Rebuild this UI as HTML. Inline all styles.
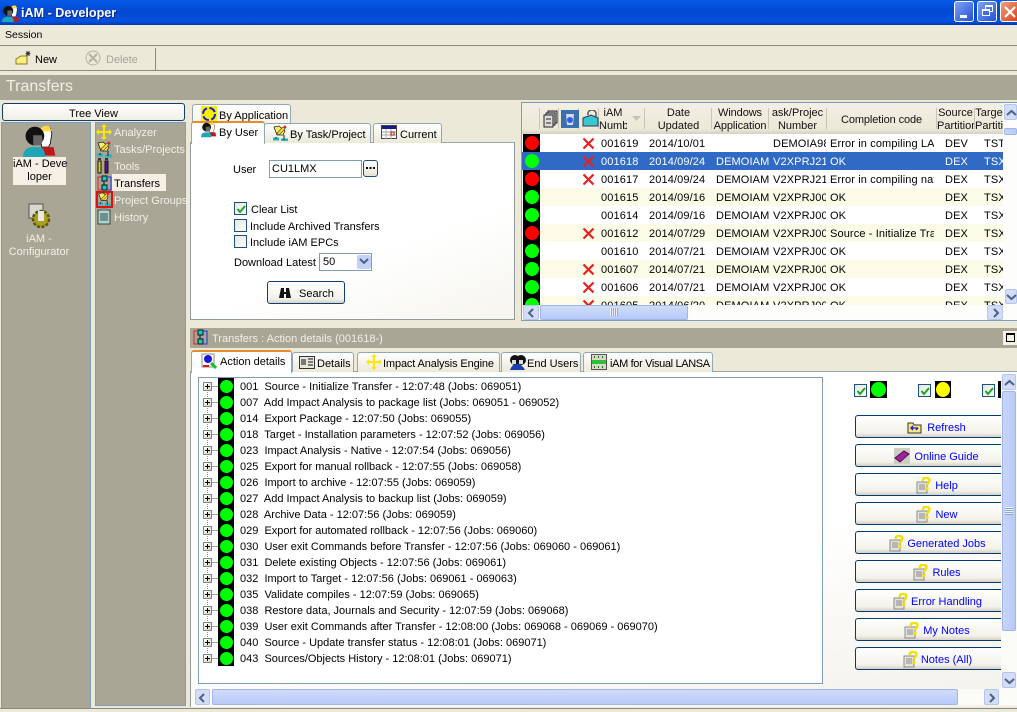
<!DOCTYPE html>
<html><head><meta charset="utf-8">
<style>
html,body{margin:0;padding:0;width:1017px;height:712px;overflow:hidden;background:#ece9d8}
body{position:relative;font-family:"Liberation Sans",sans-serif;font-size:11px;color:#000}
div,span,svg{position:absolute;box-sizing:border-box}
.t{white-space:nowrap;line-height:18px}
.c{text-align:center}
.tab{background:linear-gradient(#fff,#ece9d8);border:1px solid #91a7b4;border-bottom:none;border-radius:3px 3px 0 0}
.act{background:#fff;border-top:2px solid #e68b2c;border-left:1px solid #91a7b4;border-right:1px solid #91a7b4;border-radius:3px 3px 0 0;height:23px}
.cb{width:13px;height:13px;border:1px solid #1c5180;background:linear-gradient(135deg,#e6e6e0,#fff)}
.btn{left:855px;width:146px;height:23px;border:1px solid #003c74;border-right:none;border-radius:3px 0 0 3px;background:linear-gradient(#fff,#f3f2ea 80%,#d6d0c5);color:#00f;text-align:center;line-height:23px;white-space:nowrap;padding:1px 0 0 36px}
.pl{left:203px;width:9px;height:9px;border:1px solid #848484;background:linear-gradient(135deg,#fff,#d8d4c8)}
.pl:before{content:"";position:absolute;left:1px;top:3px;width:5px;height:1px;background:#000}
.pl:after{content:"";position:absolute;left:3px;top:1px;width:1px;height:5px;background:#000}
.g{left:220px;width:13px;height:13px;border-radius:50%;background:#0f0}
.row{left:540px;width:463px;height:18px}
.dot{left:525px;width:14px;height:14px;border-radius:50%}
.hd{top:105px;line-height:13px;text-align:center;white-space:nowrap;overflow:hidden;height:28px;color:#111;padding-top:2px}
.sep{top:108px;width:1px;height:21px;background:#c9c6b4}
.sb{background:linear-gradient(90deg,#c8d6fb,#b7c9f7);border:1px solid #9fb6ea;border-radius:2px}
.arr{background:#d3ddf8;border:1px solid #b5c6ee;border-radius:2px;color:#4d6185;text-align:center;font-weight:bold}
.w{color:#fff}
.gt{letter-spacing:.12px}
</style></head><body>
<svg width="0" height="0" style="left:0;top:0"><defs>
<g id="x"><path d="M1.500 1.500L11.500 11.500M11.500 1.500L1.500 11.500" stroke="#e8201c" stroke-width="2.200" fill="none"/></g>
<g id="q"><rect x="1" y="5" width="10" height="11" fill="#e4e2dc" stroke="#8a8a8a"/><path d="M3 8h6M3 10h6M3 12h6" stroke="#8a8a8a"/><path d="M6.500 4Q7.500 0 11 .8Q15 2 12.500 5.500L10.800 8" stroke="#f5e000" stroke-width="2.500" fill="none"/><rect x="9.500" y="10" width="3" height="3" fill="#f5e000"/></g>
<g id="tk"><path d="M2 2l5-1 6 5-2 4-6 0z" fill="#ffef60" stroke="#222" stroke-width=".8"/><path d="M5 8l6-6 2 2-6 6z" fill="#ffd820" stroke="#444" stroke-width=".6"/><path d="M12 1l2 2" stroke="#e02020" stroke-width="2"/><path d="M1 14h6M9 15h7" stroke="#19b7c8" stroke-width="3"/><path d="M4 12v2M12 10v5" stroke="#222"/></g>
<g id="ppl"><path d="M10 3q3-3 6-1l1 3-1 6-1 2h-4z" fill="#fff" stroke="#111" stroke-width=".5"/><path d="M9 4q2-4 6-3.500l2 3-7 .5z" fill="#ffd84a"/><path d="M11 13h7l1 5h-8z" fill="#c01818"/><circle cx="7" cy="6.500" r="5.500" fill="#111"/><path d="M6 6h5l.5 3-1 3H6z" fill="#666"/><path d="M0 19q0-6 6-6h4q3 1 3 6z" fill="#1fa5b8"/></g>
<g id="ck"><path d="M2.500 6l2.500 3 5-6" stroke="#21a121" stroke-width="2" fill="none"/></g>
<g id="move"><path d="M8 0l3 3H9v4h4V5l3 3-3 3V9H9v4h2l-3 3-3-3h2V9H3v2L0 8l3-3v2h4V3H5z" fill="#ffe800"/></g>
</defs></svg>

<!-- title bar -->
<div style="left:0;top:0;width:1017px;height:25px;background:linear-gradient(#0a54e4 0,#0458e6 8%,#0148d0 45%,#0451e0 85%,#0038b0)"></div>
<svg style="left:2px;top:5px" width="18" height="18" viewBox="0 0 20 20"><use href="#ppl"/></svg>
<div class="t w" style="left:21px;top:5px;font-size:12.600px;line-height:16px;font-weight:bold;text-shadow:1px 1px #03288a">iAM - Developer</div>
<div style="left:954px;top:1px;width:20px;height:21px;border:1px solid #fff;border-radius:3px;background:linear-gradient(135deg,#7fa3f2,#2350d8)"><div style="left:5px;top:13px;width:7px;height:3px;background:#fff"></div></div>
<div style="left:977px;top:1px;width:20px;height:21px;border:1px solid #fff;border-radius:3px;background:linear-gradient(135deg,#7fa3f2,#2350d8)"><div style="left:7px;top:3px;width:8px;height:7px;border:1px solid #fff;border-top-width:2px"></div><div style="left:4px;top:7px;width:8px;height:7px;border:1px solid #fff;border-top-width:2px;background:#3f6ae0"></div></div>
<div style="left:1000px;top:1px;width:17px;height:21px;border:1px solid #fff;border-right:none;border-radius:3px 0 0 3px;background:linear-gradient(135deg,#f0a080,#d84318)"><svg style="left:3px;top:4px" width="12" height="12"><path d="M1 1l10 10M11 1L1 11" stroke="#fff" stroke-width="2.200"/></svg></div>

<!-- menu / toolbar -->
<div class="t" style="left:5px;top:26px;font-size:10.500px">Session</div>
<div style="left:0;top:45px;width:1017px;height:1px;background:#8c8a80"></div>
<svg style="left:15px;top:50px" width="16" height="16"><path d="M1 9l5-3h6v8H1z" fill="#ffef80" stroke="#8a7a20"/><path d="M13 1v5M10.500 3.500h5M11 1.500l4 4M15 1.500l-4 4" stroke="#222" stroke-width=".8"/></svg>
<div class="t" style="left:35px;top:51px">New</div>
<svg style="left:85px;top:50px" width="16" height="16"><circle cx="8" cy="8" r="7" fill="none" stroke="#b5b3a6"/><path d="M4 4l8 8M12 4l-8 8" stroke="#b5b3a6" stroke-width="2" fill="none"/></svg>
<div class="t" style="left:106px;top:51px;color:#a5a398">Delete</div>
<div style="left:155px;top:48px;width:1px;height:22px;background:#8c8a80"></div>
<div style="left:0;top:70px;width:1017px;height:1px;background:#8c8a80"></div>
<div style="left:0;top:75px;width:1017px;height:25px;background:#a9a696"></div>
<div class="t w" style="left:6px;top:78px;font-size:16px;line-height:18px;color:#f2efe6">Transfers</div>

<!-- left -->
<div class="c" style="left:2px;top:103px;width:183px;height:18px;border:1px solid #0f3f73;border-radius:3px;background:linear-gradient(#fff,#f1efe5);line-height:18px;padding-top:1px">Tree View</div>
<div style="left:1px;top:122px;width:90px;height:587px;background:#a9a696;border:1px solid #7f9db9"></div>
<div style="left:95px;top:122px;width:91px;height:584px;background:#a9a696;border:1px solid #7f9db9"></div>
<svg style="left:23px;top:125px" width="34" height="34" viewBox="0 0 20 20"><use href="#ppl"/></svg>
<div class="c" style="left:13px;top:157px;width:53px;height:28px;background:#f5efe6;line-height:13px;padding-top:1px;white-space:nowrap">iAM - Deve<br>loper</div>
<svg style="left:27px;top:203px" width="26" height="26"><rect x="2" y="1" width="14" height="14" fill="#d8d8d0" stroke="#555"/><circle cx="14" cy="16" r="8" fill="#a8a020" stroke="#5a5410" stroke-width="2.500" stroke-dasharray="3 1.500"/><rect x="11" y="8" width="6" height="10" fill="#e8e8e0"/></svg>
<div class="c w" style="left:4px;top:233px;width:70px;line-height:13px;color:#f2efe6">iAM -<br>Configurator</div>

<svg style="left:96px;top:124px" width="16" height="16"><use href="#move"/></svg>
<svg style="left:96px;top:141px" width="17" height="17"><use href="#tk"/></svg>
<svg style="left:97px;top:158px" width="14" height="16"><rect x="1" y="3" width="3" height="12" fill="#e8d020" stroke="#111"/><rect x="8" y="3" width="3" height="12" fill="#601090" stroke="#111"/><path d="M1 1h3M8 1h3" stroke="#333" stroke-width="2"/></svg>
<svg style="left:97px;top:175px" width="15" height="17"><path d="M4 2H1v13h3" fill="none" stroke="#e02020"/><path d="M11 2h3v13h-3" fill="none" stroke="#2030e0"/><rect x="5" y="1" width="5" height="5" fill="#1cc" stroke="#111"/><rect x="5" y="10" width="5" height="5" fill="#1cc" stroke="#111"/><path d="M7 6v4" stroke="#111"/></svg>
<svg style="left:96px;top:191px" width="17" height="17"><path d="M1 16V1h15v15" fill="none" stroke="#e01010" stroke-width="2"/><path d="M0 16h17" stroke="#e01010" stroke-width="2"/><use href="#tk" transform="translate(1,1) scale(.85)"/></svg>
<svg style="left:97px;top:208px" width="14" height="17"><rect x="1" y="2" width="12" height="14" fill="#a8d8d0" stroke="#443"/><rect x="4" y="0" width="6" height="3" fill="#888"/><path d="M3 6h8M3 8h8M3 10h8M3 12h8" stroke="#345"/></svg>
<div class="t w" style="left:114px;top:124px;color:#f2efe6">Analyzer</div>
<div class="t w" style="left:114px;top:141px;color:#f2efe6">Tasks/Projects</div>
<div class="t w" style="left:114px;top:158px;color:#f2efe6">Tools</div>
<div style="left:112px;top:174px;width:54px;height:17px;background:#f5efe6"></div>
<div class="t" style="left:114px;top:175px">Transfers</div>
<div class="t w" style="left:114px;top:192px;color:#f2efe6">Project Groups</div>
<div class="t w" style="left:114px;top:209px;color:#f2efe6">History</div>

<!-- tab pane top -->
<div class="tab" style="left:192px;top:104px;width:99px;height:20px;background:linear-gradient(#fff,#f5f3ea)"></div>
<svg style="left:201px;top:106px" width="16" height="16"><rect width="16" height="16" fill="#f6f000"/><circle cx="8" cy="8" r="6" fill="none" stroke="#1818d8" stroke-width="2" stroke-dasharray="7 2.500"/></svg>
<div class="t" style="left:219px;top:107px">By Application</div>
<div style="left:190px;top:142px;width:325px;height:178px;background:linear-gradient(160deg,#fff,#fff 60%,#f6f5ef);border:1px solid #919b9c;border-top:1px solid #91a7b4"></div>
<div class="tab" style="left:264px;top:123px;width:107px;height:20px"></div>
<div class="tab" style="left:373px;top:123px;width:69px;height:20px"></div>
<div class="act" style="left:191px;top:121px;width:74px;height:23px"></div>
<svg style="left:201px;top:122px" width="16" height="16" viewBox="0 0 20 20"><use href="#ppl"/></svg>
<div class="t" style="left:219px;top:124px">By User</div>
<svg style="left:272px;top:125px" width="16" height="16"><use href="#tk"/></svg>
<div class="t" style="left:290px;top:126px">By Task/Project</div>
<svg style="left:381px;top:125px" width="16" height="15"><rect x=".5" y=".5" width="15" height="13" fill="#fff" stroke="#444"/><rect x="1" y="1" width="14" height="3" fill="#1a1a80"/><path d="M1 7h14M1 10h14M5 4v10M10 4v10" stroke="#aaa"/><rect x="10" y="7" width="3" height="3" fill="none" stroke="#a01010"/></svg>
<div class="t" style="left:400px;top:126px">Current</div>

<div class="t" style="left:233px;top:161px">User</div>
<div class="t" style="left:269px;top:160px;width:93px;height:18px;background:#fff;border:1px solid #7f9db9;padding:0 2px;line-height:16px">CU1LMX</div>
<div style="left:363px;top:160px;width:15px;height:17px;border:1px solid #1c4f80;border-radius:3px;background:linear-gradient(#fff,#e6e3d6)"><div style="left:2px;top:6px;width:9px;height:2px;background-image:linear-gradient(90deg,#000 2px,transparent 2px);background-size:3.500px 2px"></div></div>
<div class="cb" style="left:234px;top:202px"></div><svg style="left:235px;top:203px" width="12" height="12"><use href="#ck"/></svg>
<div class="t" style="left:251px;top:201px">Clear List</div>
<div class="cb" style="left:234px;top:219px"></div>
<div class="t" style="left:250px;top:218px">Include Archived Transfers</div>
<div class="cb" style="left:234px;top:235px"></div>
<div class="t" style="left:250px;top:234px">Include iAM EPCs</div>
<div class="t" style="left:234px;top:254px">Download Latest</div>
<div style="left:319px;top:253px;width:53px;height:18px;background:#fff;border:1px solid #7f9db9"><div class="t" style="left:3px;top:0;line-height:16px">50</div><div style="left:37px;top:1px;width:14px;height:14px;background:#c3d2f7;border-radius:2px"><svg style="left:2px;top:3px" width="10" height="8"><path d="M1 1l4 4 4-4" stroke="#4d6185" stroke-width="2" fill="none"/></svg></div></div>
<div style="left:267px;top:281px;width:78px;height:23px;border:1px solid #0f3f73;border-radius:3px;background:linear-gradient(#fff,#f3f2ea 80%,#d6d0c5)"></div>
<svg style="left:277px;top:285px" width="16" height="14"><path d="M2 13L4 3h3v4h2V3h3l2 10h-5V9H7v4z" fill="#111"/></svg>
<div class="t" style="left:299px;top:285px">Search</div>

<!-- grid -->
<div style="left:521px;top:102px;width:496px;height:219px;background:#fff;border:1px solid #7f9db9;border-right:none"></div>
<div style="left:522px;top:103px;width:481px;height:31px;background:linear-gradient(#f2efe4,#ece9d8 85%,#d6d2c0)"></div>
<div class="sep" style="left:539px"></div><div class="sep" style="left:558px"></div><div class="sep" style="left:578px"></div><div class="sep" style="left:598px"></div><div class="sep" style="left:644px"></div><div class="sep" style="left:711px"></div><div class="sep" style="left:768px"></div><div class="sep" style="left:826px"></div><div class="sep" style="left:936px"></div><div class="sep" style="left:974px"></div>
<svg style="left:543px;top:110px" width="15" height="18"><rect x="5" y="1" width="9" height="12" fill="#ccc" stroke="#222"/><rect x="3" y="3" width="9" height="12" fill="#ccc" stroke="#222"/><rect x="1" y="5" width="9" height="12" fill="#ddd" stroke="#222"/><path d="M3 9h5M3 13h5" stroke="#222"/></svg>
<svg style="left:561px;top:110px" width="18" height="18"><rect width="18" height="18" fill="#3a70b0"/><path d="M5 4h8l-1 11H6z" fill="#d8d8e8"/><circle cx="9" cy="10" r="3" fill="#3060e0"/></svg>
<svg style="left:582px;top:110px" width="17" height="18"><path d="M1 8l8-3 7 3v8H1z" fill="#38c8d0" stroke="#335"/><path d="M6 5a4 4 0 018-2v4" fill="none" stroke="#555" stroke-width="1.500"/></svg>
<div class="hd" style="left:599px;width:28px">iAM<br>Numbe</div>
<svg style="left:631px;top:115px" width="12" height="7"><path d="M1 1h9L5.500 6z" fill="#c8c5b4"/></svg>
<div class="hd" style="left:646px;width:65px">Date<br>Updated</div>
<div class="hd" style="left:712px;width:56px;letter-spacing:-.1px">Windows<br>Application</div>
<div class="hd" style="left:769px;width:57px">ask/Projec<br>Number</div>
<div class="hd" style="left:827px;width:109px;line-height:14px;padding-top:8px;letter-spacing:-.1px">Completion code</div>
<div class="hd" style="left:937px;width:37px">Source<br>Partition</div>
<div class="hd" style="left:975px;width:28px">Targe<br>Partitic</div>

<div style="left:523px;top:134px;width:17px;height:171px;background:#000"></div>
<div class="row" style="top:152px;left:522px;width:481px;background:#316ac5"></div>
<div class="row" style="top:188px;background:#fbfbe8"></div>
<div class="row" style="top:224px;background:#fbfbe8"></div>
<div class="row" style="top:260px;background:#fbfbe8"></div>
<div class="row" style="top:296px;height:9px;background:#fbfbe8"></div>
<div class="dot" style="top:136px;background:#f00"></div>
<div class="dot" style="top:154px;background:#0f0"></div>
<div class="dot" style="top:172px;background:#f00"></div>
<div class="dot" style="top:190px;background:#0f0"></div>
<div class="dot" style="top:208px;background:#0f0"></div>
<div class="dot" style="top:226px;background:#f00"></div>
<div class="dot" style="top:244px;background:#0f0"></div>
<div class="dot" style="top:262px;background:#0f0"></div>
<div class="dot" style="top:280px;background:#0f0"></div>
<svg style="left:582px;top:137px" width="13" height="13"><use href="#x"/></svg>
<svg style="left:582px;top:155px" width="13" height="13"><use href="#x"/></svg>
<svg style="left:582px;top:173px" width="13" height="13"><use href="#x"/></svg>
<svg style="left:582px;top:227px" width="13" height="13"><use href="#x"/></svg>
<svg style="left:582px;top:263px" width="13" height="13"><use href="#x"/></svg>
<svg style="left:582px;top:281px" width="13" height="13"><use href="#x"/></svg>

<div class="gt" style="left:600px;top:134px;width:403px;height:171px;overflow:hidden">
<div class="t" style="left:1px;top:1px">001619</div><div class="t" style="left:49px;top:1px">2014/10/01</div><div class="t" style="left:173px;top:1px;width:53px;overflow:hidden">DEMOIA98</div><div class="t" style="left:230px;top:1px;width:104px;overflow:hidden">Error in compiling LAN</div><div class="t" style="left:345px;top:1px">DEV</div><div class="t" style="left:384px;top:1px">TST</div>
<div class="t w" style="left:1px;top:19px">001618</div><div class="t w" style="left:49px;top:19px">2014/09/24</div><div class="t w" style="left:116px;top:19px">DEMOIAM</div><div class="t w" style="left:173px;top:19px;width:53px;overflow:hidden">V2XPRJ21</div><div class="t w" style="left:230px;top:19px">OK</div><div class="t w" style="left:345px;top:19px">DEX</div><div class="t w" style="left:384px;top:19px">TSX</div>
<div class="t" style="left:1px;top:37px">001617</div><div class="t" style="left:49px;top:37px">2014/09/24</div><div class="t" style="left:116px;top:37px">DEMOIAM</div><div class="t" style="left:173px;top:37px;width:53px;overflow:hidden">V2XPRJ21</div><div class="t" style="left:230px;top:37px;width:104px;overflow:hidden">Error in compiling native</div><div class="t" style="left:345px;top:37px">DEX</div><div class="t" style="left:384px;top:37px">TSX</div>
<div class="t" style="left:1px;top:55px">001615</div><div class="t" style="left:49px;top:55px">2014/09/16</div><div class="t" style="left:116px;top:55px">DEMOIAM</div><div class="t" style="left:173px;top:55px;width:53px;overflow:hidden">V2XPRJ00</div><div class="t" style="left:230px;top:55px">OK</div><div class="t" style="left:345px;top:55px">DEX</div><div class="t" style="left:384px;top:55px">TSX</div>
<div class="t" style="left:1px;top:73px">001614</div><div class="t" style="left:49px;top:73px">2014/09/16</div><div class="t" style="left:116px;top:73px">DEMOIAM</div><div class="t" style="left:173px;top:73px;width:53px;overflow:hidden">V2XPRJ00</div><div class="t" style="left:230px;top:73px">OK</div><div class="t" style="left:345px;top:73px">DEX</div><div class="t" style="left:384px;top:73px">TSX</div>
<div class="t" style="left:1px;top:91px">001612</div><div class="t" style="left:49px;top:91px">2014/07/29</div><div class="t" style="left:116px;top:91px">DEMOIAM</div><div class="t" style="left:173px;top:91px;width:53px;overflow:hidden">V2XPRJ00</div><div class="t" style="left:230px;top:91px;width:104px;overflow:hidden">Source - Initialize Transfer</div><div class="t" style="left:345px;top:91px">DEX</div><div class="t" style="left:384px;top:91px">TSX</div>
<div class="t" style="left:1px;top:109px">001610</div><div class="t" style="left:49px;top:109px">2014/07/21</div><div class="t" style="left:116px;top:109px">DEMOIAM</div><div class="t" style="left:173px;top:109px;width:53px;overflow:hidden">V2XPRJ00</div><div class="t" style="left:230px;top:109px">OK</div><div class="t" style="left:345px;top:109px">DEX</div><div class="t" style="left:384px;top:109px">TSX</div>
<div class="t" style="left:1px;top:127px">001607</div><div class="t" style="left:49px;top:127px">2014/07/21</div><div class="t" style="left:116px;top:127px">DEMOIAM</div><div class="t" style="left:173px;top:127px;width:53px;overflow:hidden">V2XPRJ00</div><div class="t" style="left:230px;top:127px">OK</div><div class="t" style="left:345px;top:127px">DEX</div><div class="t" style="left:384px;top:127px">TSX</div>
<div class="t" style="left:1px;top:145px">001606</div><div class="t" style="left:49px;top:145px">2014/07/21</div><div class="t" style="left:116px;top:145px">DEMOIAM</div><div class="t" style="left:173px;top:145px;width:53px;overflow:hidden">V2XPRJ00</div><div class="t" style="left:230px;top:145px">OK</div><div class="t" style="left:345px;top:145px">DEX</div><div class="t" style="left:384px;top:145px">TSX</div>
<div class="t" style="left:1px;top:163px">001605</div><div class="t" style="left:49px;top:163px">2014/06/20</div><div class="t" style="left:116px;top:163px">DEMOIAM</div><div class="t" style="left:173px;top:163px;width:53px;overflow:hidden">V2XPRJ00</div><div class="t" style="left:230px;top:163px">OK</div><div class="t" style="left:345px;top:163px">DEX</div><div class="t" style="left:384px;top:163px">TSX</div>
</div>
<div style="left:525px;top:298px;width:14px;height:7px;overflow:hidden"><div style="left:0;top:0;width:14px;height:14px;border-radius:50%;background:#0f0"></div></div>
<svg style="left:582px;top:299px" width="13" height="6"><use href="#x"/></svg>
<!-- grid scrolls -->
<div style="left:522px;top:305px;width:495px;height:15px;background:#fdfdfb"></div>
<div class="arr" style="left:523px;top:305px;width:16px;height:15px"><svg style="left:3px;top:2px" width="9" height="10"><path d="M6 1L2 5l4 4" stroke="#4d6185" stroke-width="2" fill="none"/></svg></div>
<div class="sb" style="left:540px;top:305px;width:148px;height:15px;background:linear-gradient(#cfdcfc,#b7c9f7)"></div>
<div style="left:610px;top:308px;width:8px;height:8px;background:repeating-linear-gradient(90deg,#eef2fe 0 1px,#8ea5dc 1px 2px)"></div>
<div class="arr" style="left:987px;top:305px;width:16px;height:15px"><svg style="left:4px;top:2px" width="9" height="10"><path d="M2 1l4 4-4 4" stroke="#4d6185" stroke-width="2" fill="none"/></svg></div>
<div style="left:1003px;top:103px;width:14px;height:202px;background:#fdfdfb"></div>
<div class="arr" style="left:1004px;top:104px;width:13px;height:16px"><svg style="left:1px;top:4px" width="11" height="8"><path d="M1 6l4.500-4L10 6" stroke="#4d6185" stroke-width="2" fill="none"/></svg></div>
<div class="sb" style="left:1004px;top:128px;width:13px;height:7px"></div>
<div class="arr" style="left:1005px;top:289px;width:12px;height:15px"><svg style="left:0;top:3px" width="11" height="8"><path d="M1 2l4.500 4L10 2" stroke="#4d6185" stroke-width="2" fill="none"/></svg></div>

<!-- details -->
<div style="left:190px;top:328px;width:827px;height:20px;background:#a9a696"></div>
<svg style="left:193px;top:329px" width="15" height="17"><path d="M4 2H1v13h3" fill="none" stroke="#e02020"/><path d="M11 2h3v13h-3" fill="none" stroke="#2030e0"/><rect x="5" y="1" width="5" height="5" fill="#1cc" stroke="#111"/><rect x="5" y="10" width="5" height="5" fill="#1cc" stroke="#111"/><path d="M7 6v4" stroke="#111"/></svg>
<div class="t w" style="left:212px;top:330px;color:#f2efe6">Transfers : Action details (001618-)</div>
<div style="left:1003px;top:331px;width:14px;height:14px;background:#f4f2e8"><div style="left:3px;top:2px;width:9px;height:9px;border:1px solid #000;border-top-width:2px"></div></div>
<div style="left:190px;top:371px;width:827px;height:336px;background:linear-gradient(170deg,#fff,#fff 55%,#f3f1ea);border-top:1px solid #91a7b4;border-left:1px solid #919b9c"></div>
<div class="tab" style="left:292px;top:352px;width:62px;height:20px"></div>
<div class="tab" style="left:357px;top:352px;width:143px;height:20px"></div>
<div class="tab" style="left:501px;top:352px;width:80px;height:20px"></div>
<div class="tab" style="left:583px;top:352px;width:130px;height:20px"></div>
<div class="act" style="left:191px;top:350px;width:101px;height:23px"></div>
<svg style="left:201px;top:353px" width="16" height="16"><rect x="1" y="1" width="12" height="13" fill="#fff" stroke="#889"/><circle cx="7" cy="6" r="4" fill="#1818d8"/><path d="M10 10l5 5" stroke="#18c018" stroke-width="3"/><path d="M2 13h6" stroke="#e01818" stroke-width="2"/></svg>
<div class="t" style="left:220px;top:353px">Action details</div>
<svg style="left:299px;top:356px" width="16" height="13"><rect x=".5" y=".5" width="15" height="12" fill="#e8e6da" stroke="#333"/><rect x="2" y="3" width="5" height="6" fill="#777"/><path d="M9 3h5M9 6h5M9 9h5" stroke="#111"/></svg>
<div class="t" style="left:317px;top:355px">Details</div>
<svg style="left:366px;top:354px" width="16" height="16"><use href="#move"/></svg>
<div class="t" style="left:383px;top:355px;letter-spacing:-.13px">Impact Analysis Engine</div>
<svg style="left:509px;top:354px" width="17" height="17"><circle cx="6" cy="6" r="5" fill="#111"/><circle cx="12" cy="6" r="5" fill="#111"/><path d="M3 6h4v4H3zM10 6h4v4h-4z" fill="#ddd"/><path d="M1 16q2-6 7-6t8 6z" fill="#1a3fb0"/></svg>
<div class="t" style="left:527px;top:355px">End Users</div>
<svg style="left:591px;top:354px" width="16" height="16"><rect x=".5" y=".5" width="15" height="15" fill="#d8d8cc" stroke="#555"/><rect x="1" y="6" width="14" height="4" fill="#30c030"/><path d="M3 3h1M7 3h1M11 3h1M3 13h1M7 13h1M11 13h1" stroke="#207020" stroke-width="2"/></svg>
<div class="t" style="left:610px;top:355px;letter-spacing:-.35px">iAM for Visual LANSA</div>

<!-- tree list -->
<div style="left:198px;top:377px;width:625px;height:307px;background:#fff;border:1px solid #7f9db9"></div>
<div style="left:218px;top:378px;width:16px;height:288px;background:#000"></div>
<div style="left:207px;top:382px;width:1px;height:276px;background-image:linear-gradient(#999 1px,transparent 1px);background-size:1px 2px"></div>
<div style="left:212px;top:386px;width:6px;height:273px;background:repeating-linear-gradient(#aaa 0 1px,transparent 1px 16px)"></div>
<div class="pl" style="top:382px"></div><div class="pl" style="top:398px"></div><div class="pl" style="top:414px"></div><div class="pl" style="top:430px"></div><div class="pl" style="top:446px"></div><div class="pl" style="top:462px"></div><div class="pl" style="top:478px"></div><div class="pl" style="top:494px"></div><div class="pl" style="top:510px"></div><div class="pl" style="top:526px"></div><div class="pl" style="top:542px"></div><div class="pl" style="top:558px"></div><div class="pl" style="top:574px"></div><div class="pl" style="top:590px"></div><div class="pl" style="top:606px"></div><div class="pl" style="top:622px"></div><div class="pl" style="top:638px"></div><div class="pl" style="top:654px"></div>
<div class="g" style="top:380px"></div><div class="g" style="top:396px"></div><div class="g" style="top:412px"></div><div class="g" style="top:428px"></div><div class="g" style="top:444px"></div><div class="g" style="top:460px"></div><div class="g" style="top:476px"></div><div class="g" style="top:492px"></div><div class="g" style="top:508px"></div><div class="g" style="top:524px"></div><div class="g" style="top:540px"></div><div class="g" style="top:556px"></div><div class="g" style="top:572px"></div><div class="g" style="top:588px"></div><div class="g" style="top:604px"></div><div class="g" style="top:620px"></div><div class="g" style="top:636px"></div><div class="g" style="top:652px"></div>
<div class="t" style="left:240px;top:378px">001&nbsp; Source - Initialize Transfer - 12:07:48 (Jobs: 069051)</div>
<div class="t" style="left:240px;top:394px">007&nbsp; Add Impact Analysis to package list (Jobs: 069051 - 069052)</div>
<div class="t" style="left:240px;top:410px">014&nbsp; Export Package - 12:07:50 (Jobs: 069055)</div>
<div class="t" style="left:240px;top:426px">018&nbsp; Target - Installation parameters - 12:07:52 (Jobs: 069056)</div>
<div class="t" style="left:240px;top:442px">023&nbsp; Impact Analysis - Native - 12:07:54 (Jobs: 069056)</div>
<div class="t" style="left:240px;top:458px">025&nbsp; Export for manual rollback - 12:07:55 (Jobs: 069058)</div>
<div class="t" style="left:240px;top:474px">026&nbsp; Import to archive - 12:07:55 (Jobs: 069059)</div>
<div class="t" style="left:240px;top:490px">027&nbsp; Add Impact Analysis to backup list (Jobs: 069059)</div>
<div class="t" style="left:240px;top:506px">028&nbsp; Archive Data - 12:07:56 (Jobs: 069059)</div>
<div class="t" style="left:240px;top:522px">029&nbsp; Export for automated rollback - 12:07:56 (Jobs: 069060)</div>
<div class="t" style="left:240px;top:538px">030&nbsp; User exit Commands before Transfer - 12:07:56 (Jobs: 069060 - 069061)</div>
<div class="t" style="left:240px;top:554px">031&nbsp; Delete existing Objects - 12:07:56 (Jobs: 069061)</div>
<div class="t" style="left:240px;top:570px">032&nbsp; Import to Target - 12:07:56 (Jobs: 069061 - 069063)</div>
<div class="t" style="left:240px;top:586px">035&nbsp; Validate compiles - 12:07:59 (Jobs: 069065)</div>
<div class="t" style="left:240px;top:602px">038&nbsp; Restore data, Journals and Security - 12:07:59 (Jobs: 069068)</div>
<div class="t" style="left:240px;top:618px">039&nbsp; User exit Commands after Transfer - 12:08:00 (Jobs: 069068 - 069069 - 069070)</div>
<div class="t" style="left:240px;top:634px">040&nbsp; Source - Update transfer status - 12:08:01 (Jobs: 069071)</div>
<div class="t" style="left:240px;top:650px">043&nbsp; Sources/Objects History - 12:08:01 (Jobs: 069071)</div>

<!-- right side -->
<div class="cb" style="left:854px;top:384px"></div><svg style="left:855px;top:385px" width="12" height="12"><use href="#ck"/></svg>
<div style="left:870px;top:381px;width:17px;height:17px;background:#000"><div style="left:1px;top:1px;width:15px;height:15px;border-radius:50%;background:#0f0"></div></div>
<div class="cb" style="left:918px;top:384px"></div><svg style="left:919px;top:385px" width="12" height="12"><use href="#ck"/></svg>
<div style="left:935px;top:381px;width:16px;height:17px;background:#000"><div style="left:1px;top:1px;width:14px;height:15px;border-radius:50%;background:#ff0"></div></div>
<div class="cb" style="left:982px;top:384px"></div><svg style="left:983px;top:385px" width="12" height="12"><use href="#ck"/></svg>
<div style="left:998px;top:381px;width:3px;height:17px;background:#000"></div>

<div class="btn" style="top:415px">Refresh</div>
<svg style="left:907px;top:420px" width="15" height="14"><path d="M1 3h5l1 2h7v8H1z" fill="#ffe870" stroke="#333"/><path d="M4 8h7M6 6L4 8l2 2M9 10l2-2" stroke="#1818d8" stroke-width="1.300" fill="none"/></svg>
<div class="btn" style="top:444px">Online Guide</div>
<svg style="left:894px;top:448px" width="16" height="16"><rect width="16" height="16" fill="#cfccc2"/><path d="M1 10l9-7 5 3-9 8z" fill="#a020a0" stroke="#4a104a"/></svg>
<div class="btn" style="top:473px">Help</div>
<svg style="left:916px;top:477px" width="16" height="17"><use href="#q"/></svg>
<div class="btn" style="top:502px">New</div>
<svg style="left:916px;top:506px" width="16" height="17"><use href="#q"/></svg>
<div class="btn" style="top:531px">Generated Jobs</div>
<svg style="left:889px;top:535px" width="16" height="17"><use href="#q"/></svg>
<div class="btn" style="top:560px">Rules</div>
<svg style="left:913px;top:564px" width="16" height="17"><use href="#q"/></svg>
<div class="btn" style="top:589px">Error Handling</div>
<svg style="left:893px;top:593px" width="16" height="17"><use href="#q"/></svg>
<div class="btn" style="top:618px">My Notes</div>
<svg style="left:904px;top:622px" width="16" height="17"><use href="#q"/></svg>
<div class="btn" style="top:647px">Notes (All)</div>
<svg style="left:903px;top:651px" width="16" height="17"><use href="#q"/></svg>

<!-- detail scrolls -->
<div style="left:1001px;top:373px;width:16px;height:316px;background:#fbfbf7"></div>
<div class="arr" style="left:1002px;top:374px;width:14px;height:16px"><svg style="left:1px;top:4px" width="11" height="8"><path d="M1 6l4.500-4L10 6" stroke="#4d6185" stroke-width="2" fill="none"/></svg></div>
<div class="sb" style="left:1002px;top:391px;width:14px;height:240px"></div>
<div style="left:1005px;top:507px;width:8px;height:8px;background:repeating-linear-gradient(#eef2fe 0 1px,#8ea5dc 1px 2px)"></div>
<div class="arr" style="left:1002px;top:672px;width:14px;height:16px"><svg style="left:1px;top:4px" width="11" height="8"><path d="M1 2l4.500 4L10 2" stroke="#4d6185" stroke-width="2" fill="none"/></svg></div>
<div style="left:195px;top:689px;width:822px;height:16px;background:#fbfbf7"></div>
<div class="arr" style="left:195px;top:689px;width:15px;height:16px"><svg style="left:2px;top:3px" width="9" height="10"><path d="M6 1L2 5l4 4" stroke="#4d6185" stroke-width="2" fill="none"/></svg></div>
<div class="sb" style="left:212px;top:689px;width:746px;height:16px;background:linear-gradient(#cfdcfc,#b7c9f7)"></div>
<div class="arr" style="left:984px;top:689px;width:15px;height:16px"><svg style="left:3px;top:3px" width="9" height="10"><path d="M2 1l4 4-4 4" stroke="#4d6185" stroke-width="2" fill="none"/></svg></div>
<div style="left:0;top:708px;width:1017px;height:1px;background:#8c8a80"></div>
</body></html>
